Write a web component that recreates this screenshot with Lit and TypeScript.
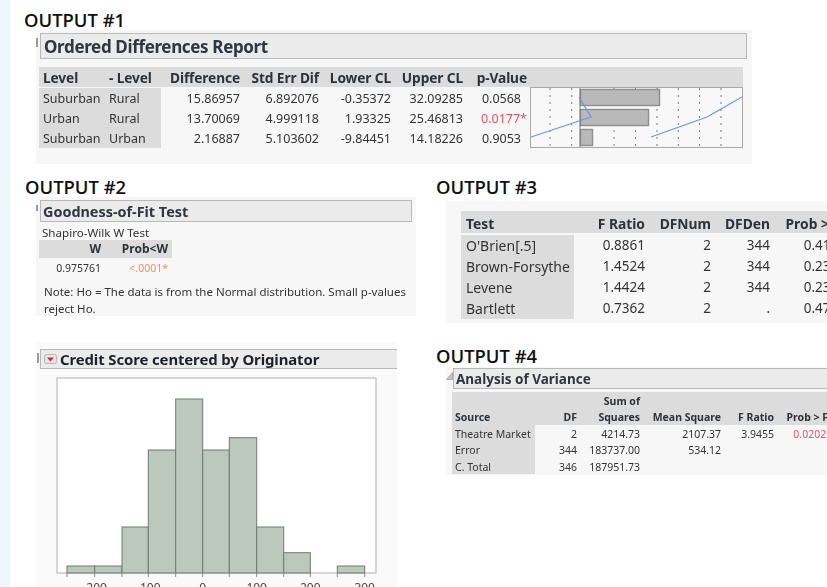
import { LitElement, css, html, svg } from "lit";
import { customElement } from "lit/decorators.js";

type Cell = string | { t: string; c: string };

const ordered = {
  head: ["Level", "- Level", "Difference", "Std Err Dif", "Lower CL", "Upper CL", "p-Value", ""],
  rows: [
    ["Suburban", "Rural", "15.86957", "6.892076", "-0.35372", "32.09285", { t: "0.0568", c: "pad" }],
    ["Urban", "Rural", "13.70069", "4.999118", "1.93325", "25.46813", { t: "0.0177*", c: "red" }],
    ["Suburban", "Urban", "2.16887", "5.103602", "-9.84451", "14.18226", { t: "0.9053", c: "pad" }],
  ] as Cell[][],
};

const levene = {
  head: ["Test", "F Ratio", "DFNum", "DFDen", "Prob > F"],
  rows: [
    ["O'Brien[.5]", "0.8861", "2", "344", "0.4127"],
    ["Brown-Forsythe", "1.4524", "2", "344", "0.2355"],
    ["Levene", "1.4424", "2", "344", "0.2376"],
    ["Bartlett", "0.7362", "2", ".", "0.4789"],
  ] as Cell[][],
};

const anova = {
  head: ["Source", "DF", "Sum of\nSquares", "Mean Square", "F Ratio", "Prob > F"],
  rows: [
    ["Theatre Market", "2", "4214.73", "2107.37", "3.9455", { t: "0.0202*", c: "red" }],
    ["Error", "344", "183737.00", "534.12", "", ""],
    ["C. Total", "346", "187951.73", "", "", ""],
  ] as Cell[][],
};

// bin edges and bar tops, measured in svg px
const edges = [67, 94.7, 122, 148.3, 175.7, 202.7, 229.3, 256.7, 283.7, 310.3, 337.3, 364.7];
const tops = [189, 189, 150, 73, 22, 73, 60.7, 150, 175.7, 0, 189];
const ticks: [number, string][] = [
  [94.7, "-200"],
  [148.3, "-100"],
  [202.7, "0"],
  [256.7, "100"],
  [310.3, "200"],
  [364.7, "300"],
];

const gridlines = [20, 41.7, 84, 105.5, 127, 148.3, 169.5, 191];

@customElement("app-root")
export class AppRoot extends LitElement {
  static styles = css`
    :host {
      display: flex;
      width: 827px;
      height: 587px;
      overflow: hidden;
      background: #fff;
      color: #333;
      font-family: "Noto Sans", sans-serif;
    }
    .strip {
      flex: none;
      width: 10px;
      background: #ecf8fb;
    }
    .main {
      flex: none;
      width: 817px;
      padding-top: 10px;
    }
    h2 {
      margin: 0;
      height: 20px;
      font: 600 18.4px/20px "Open Sans", sans-serif;
      color: #111;
    }
    .first h2 {
      margin-left: 14px;
    }
    .columns {
      display: grid;
      grid-template-columns: 426px 1fr;
      margin-top: 13px;
    }
    .panel {
      position: relative;
      background: #f7f7f7;
      overflow: hidden;
    }
    .title {
      box-sizing: border-box;
      background: #ebebeb;
      border: 1px solid #b9b9b9;
      font-weight: 700;
      color: #2f3640;
      display: flex;
      align-items: center;
      white-space: nowrap;
    }
    .blurred {
      filter: blur(0.35px);
    }
    .mark {
      position: absolute;
      width: 2px;
      background: #9a9a9a;
    }

    .report {
      margin-left: 26px;
      width: 716px;
      height: 134px;
      padding: 3px 0 0 3px;
      box-sizing: border-box;
    }
    .report .mark {
      left: 0;
      top: 8px;
      height: 9px;
    }
    .report .title {
      margin-left: 1px;
      width: 707px;
      height: 26px;
      padding-left: 3px;
      font-size: 17px;
      letter-spacing: -0.35px;
    }
    .table {
      display: grid;
      white-space: nowrap;
    }
    .cell {
      text-align: right;
      padding-right: 3px;
    }
    .cell.left {
      text-align: left;
      padding: 0 0 0 4px;
    }
    .cell.head {
      background: #dcdcdc;
      font-weight: 700;
      color: #2c323a;
      white-space: pre-line;
    }
    .cell.label {
      background: #dcdcdc;
    }
    .cell.red {
      color: #ea5365;
    }
    .cell.pad {
      padding-right: 9px;
    }
    .t-ordered {
      margin-top: 8px;
      grid-template-columns: 66px 56px 82px 79px 72px 72px 64px 213px;
      grid-template-rows: 20px 1px repeat(3, 20px);
      font-size: 12.5px;
      line-height: 22px;
      width: 704px;
    }
    .t-ordered .cell.head {
      font-size: 13.7px;
      letter-spacing: -0.1px;
    }
    .t-ordered .spacer {
      grid-column: 1 / 8;
      height: 1px;
      background: #f7f7f7;
    }
    .spark {
      display: block;
      grid-column: 8;
      grid-row: 2 / 6;
      width: 213px;
      height: 61px;
    }

    .gof {
      margin-left: 26px;
      width: 380px;
      height: 119px;
      padding: 3px 0 0 3px;
      box-sizing: border-box;
      overflow: visible;
    }
    .gof .mark {
      left: 0;
      top: 8px;
      height: 6px;
    }
    .gof .title {
      margin-left: 1px;
      width: 372px;
      height: 22px;
      padding-left: 2px;
      font-size: 14.4px;
    }
    .sub {
      margin: 3px 0 0 3px;
      height: 15px;
      font-size: 11.6px;
      line-height: 15px;
    }
    .t-gof {
      grid-template-columns: 66px 67px;
      width: 133px;
      font-size: 10.5px;
      line-height: 18px;
    }
    .t-gof .cell {
      padding-right: 4px;
    }
    .t-gof .cell.head {
      font-size: 12px;
    }
    .t-gof .value {
      line-height: 20px;
    }
    .orange {
      color: #e8935a;
    }
    .note {
      margin: 5px 0 0 5px;
      width: 372px;
      font-size: 11.5px;
      line-height: 17px;
    }

    .hist {
      margin: 26px 0 0 27px;
      width: 360px;
      padding: 7px 0 0 3px;
      box-sizing: border-box;
      height: 245px;
      background: #fafafa;
    }
    .hist .mark {
      left: 0;
      top: 11px;
      height: 10px;
    }
    .hist .title {
      height: 20px;
      gap: 3px;
      padding-left: 3px;
      border-right: 0;
      font-size: 14.9px;
      letter-spacing: -0.1px;
      color: #1d2129;
    }
    .chart {
      display: block;
      margin: 8px 0 0 8px;
      font-family: "Noto Sans", sans-serif;
    }

    .levene {
      margin: 4px 0 0 10px;
      height: 122px;
      padding: 10px 0 0 15px;
      box-sizing: border-box;
    }
    .t-levene {
      width: 388px;
      grid-template-columns: 113px 74px 66px 59px 76px;
      grid-template-rows: 22px 2px repeat(4, 21px);
      font-size: 13.5px;
      line-height: 21.6px;
    }
    .t-levene .cell.head {
      font-size: 13.8px;
      line-height: 26px;
    }
    .t-levene .cell.head:nth-child(5) {
      padding-right: 9px;
    }
    .t-levene .cell.left {
      padding-left: 5px;
    }
    .t-levene .label {
      font-size: 14px;
    }
    .t-levene .spacer {
      grid-column: 1 / 6;
    }

    .second {
      margin-top: 23px;
    }
    .anova {
      margin: 1px 0 0 10px;
      height: 108px;
      padding: 1px 0 0 6px;
      box-sizing: border-box;
    }
    .anova .tri {
      position: absolute;
      left: 0;
      top: 5px;
    }
    .anova .title {
      margin-left: 1px;
      width: 400px;
      height: 21px;
      padding-left: 2px;
      font-size: 13.5px;
      border-right: 0;
    }
    .t-anova {
      margin-top: 3px;
      width: 383px;
      grid-template-columns: 83px 45px 63px 81px 53px 58px;
      grid-template-rows: 33px 0 repeat(3, 16.3px);
      font-size: 10.5px;
      line-height: 18px;
    }
    .t-anova .cell.left {
      padding-left: 3px;
    }
    .t-anova .cell.head {
      line-height: 16px;
      align-self: stretch;
      display: flex;
      align-items: flex-end;
      justify-content: flex-end;
      text-align: right;
    }
    .t-anova .cell.head.left {
      justify-content: flex-start;
    }
    .t-anova .cell.head:nth-child(6) {
      padding-right: 7px;
    }
    .t-anova .spacer {
      grid-column: 1 / 7;
    }
    .toggle {
      flex: none;
      display: block;
    }
  `;

  private table(name: string, data: { head: string[]; rows: Cell[][] }, labels: number) {
    return html`<div class="table ${name}">
      ${data.head.map(
        (h, i) => html`<div class="cell head ${i < labels ? "left" : ""}">${h}</div>`,
      )}
      <div class="spacer"></div>
      ${data.rows.map((row) =>
        row.map((cell, i) => {
          const text = typeof cell === "string" ? cell : cell.t;
          const extra = typeof cell === "string" ? "" : cell.c;
          return html`<div class="cell ${i < labels ? "left label" : ""} ${extra}">${text}</div>`;
        }),
      )}
      ${name === "t-ordered" ? this.spark() : ""}
    </div>`;
  }

  private spark() {
    return html`<svg class="spark" viewBox="0 0 213 61">
      <rect x="0.5" y="0.5" width="212" height="60" fill="#f8f8f8" stroke="#a8a8a8" />
      ${gridlines.map(
        (x) =>
          svg`<line x1=${x} x2=${x} y1="1" y2="60" stroke="#777" stroke-dasharray="2 5" />`,
      )}
      <rect x="50.5" y="2.5" width="79" height="16" fill="#b9b9b9" stroke="#8e8e8e" stroke-width="1.4" />
      <rect x="50.5" y="22.5" width="68" height="16" fill="#b9b9b9" stroke="#8e8e8e" stroke-width="1.4" />
      <rect x="50.5" y="42.5" width="12" height="16" fill="#b9b9b9" stroke="#8e8e8e" stroke-width="1.4" />
      <line x1="50" x2="50" y1="1" y2="60" stroke="#7a7a7a" />
      <polyline points="49,10 61,30 1,50" fill="none" stroke="#6c93ee" stroke-width="1.2" />
      <polyline points="121,50 177,30 212,10" fill="none" stroke="#6c93ee" stroke-width="1.2" />
    </svg>`;
  }

  private histogram() {
    return html`<svg class="chart" width="340" height="215" viewBox="0 0 340 215">
      <g transform="translate(-48 0)">
        <rect x="57" y="1" width="319" height="195" fill="#fff" stroke="#bdbdbd" stroke-width="1.2" />
        ${tops.map((top, i) =>
          top
            ? svg`<rect x=${edges[i]} y=${top} width=${edges[i + 1] - edges[i]} height=${196 - top}
                fill="#bdc8bc" stroke="#6f7a70" stroke-width="1" />`
            : "",
        )}
        ${edges.map((x) =>
          svg`<line x1=${x} x2=${x} y1="196" y2="200" stroke="#8a8a8a" />`,
        )}
        ${ticks.map(
          ([x, label]) =>
            svg`<text x=${x} y="215" text-anchor="middle" font-size="12" fill="#444">${label}</text>`,
        )}
      </g>
    </svg>`;
  }

  render() {
    return html`
      <div class="strip"></div>
      <div class="main">
        <div class="first">
          <h2>OUTPUT #1</h2>
          <section class="panel report blurred">
            <span class="mark"></span>
            <div class="title">Ordered Differences Report</div>
            ${this.table("t-ordered", ordered, 2)}
          </section>
        </div>
        <div class="columns">
          <div>
            <h2 style="margin-left:15px">OUTPUT #2</h2>
            <section class="panel gof blurred">
              <span class="mark"></span>
              <div class="title">Goodness-of-Fit Test</div>
              <div class="sub">Shapiro-Wilk W Test</div>
              <div class="table t-gof">
                <div class="cell head">W</div>
                <div class="cell head">Prob&lt;W</div>
                <div class="cell value">0.975761</div>
                <div class="cell value orange">&lt;.0001*</div>
              </div>
              <div class="note">
                Note: Ho = The data is from the Normal distribution. Small p-values reject Ho.
              </div>
            </section>
            <section class="panel hist blurred">
              <span class="mark"></span>
              <div class="title">
                <svg class="toggle" width="13" height="10" viewBox="0 0 13 10">
                  <rect x="0.5" y="0.5" width="12" height="9" rx="2" fill="#e6e6e6" stroke="#b5b5b5" />
                  <path d="M3 3.5h7L6.5 7.5z" fill="#c8302a" />
                </svg>
                Credit Score centered by Originator
              </div>
              ${this.histogram()}
            </section>
          </div>
          <div>
            <h2>OUTPUT #3</h2>
            <section class="panel levene blurred">${this.table("t-levene", levene, 1)}</section>
            <h2 class="second">OUTPUT #4</h2>
            <section class="panel anova blurred">
              <svg class="tri" width="7" height="8" viewBox="0 0 7 8">
                <path d="M0.5 7.5h6v-7z" fill="#c4c4c4" stroke="#999" stroke-width="0.7" />
              </svg>
              <div class="title">Analysis of Variance</div>
              ${this.table("t-anova", anova, 1)}
            </section>
          </div>
        </div>
      </div>
    `;
  }
}
